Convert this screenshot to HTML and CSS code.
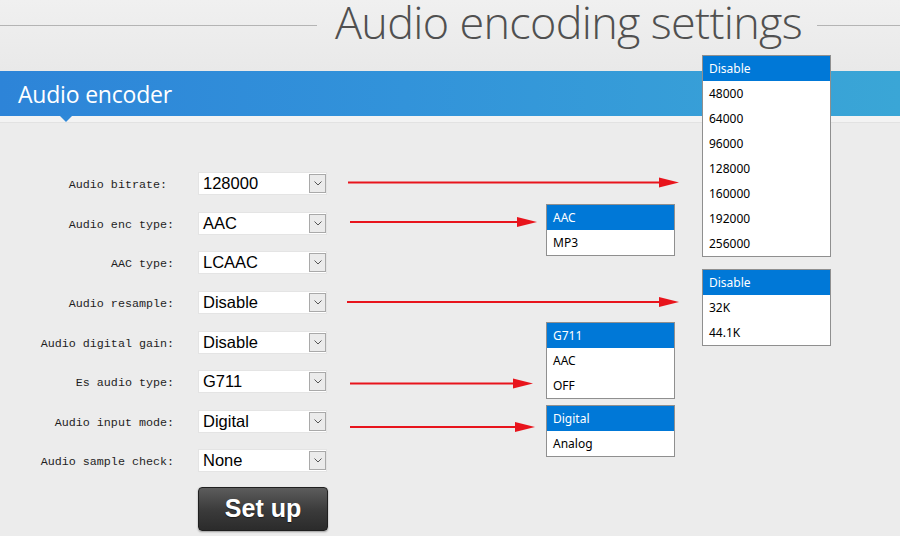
FILE: index.html
```html
<!DOCTYPE html>
<html>
<head>
<meta charset="utf-8">
<link rel="stylesheet" href="styles.css">
</head>
<body>
<header class="title-row">
  <span class="rule rule-left"></span>
  <h1 class="title">Audio encoding settings</h1>
  <span class="rule rule-right"></span>
</header>
<div class="bar"><h2 class="bar-title">Audio encoder</h2></div>
<div class="strip"></div>
<form class="form">
  <label class="lbl">Audio bitrate:&nbsp;</label>
  <div class="sel"><span class="sel-val">128000</span><span class="sel-btn"><svg viewBox="0 0 8 5" width="8" height="5"><path d="M0.5 0.5 L4 4 L7.5 0.5" fill="none" stroke="#555" stroke-width="1"/></svg></span></div>
  <label class="lbl">Audio enc type:</label>
  <div class="sel"><span class="sel-val">AAC</span><span class="sel-btn"><svg viewBox="0 0 8 5" width="8" height="5"><path d="M0.5 0.5 L4 4 L7.5 0.5" fill="none" stroke="#555" stroke-width="1"/></svg></span></div>
  <label class="lbl">AAC type:</label>
  <div class="sel"><span class="sel-val">LCAAC</span><span class="sel-btn"><svg viewBox="0 0 8 5" width="8" height="5"><path d="M0.5 0.5 L4 4 L7.5 0.5" fill="none" stroke="#555" stroke-width="1"/></svg></span></div>
  <label class="lbl">Audio resample:</label>
  <div class="sel"><span class="sel-val">Disable</span><span class="sel-btn"><svg viewBox="0 0 8 5" width="8" height="5"><path d="M0.5 0.5 L4 4 L7.5 0.5" fill="none" stroke="#555" stroke-width="1"/></svg></span></div>
  <label class="lbl">Audio digital gain:</label>
  <div class="sel"><span class="sel-val">Disable</span><span class="sel-btn"><svg viewBox="0 0 8 5" width="8" height="5"><path d="M0.5 0.5 L4 4 L7.5 0.5" fill="none" stroke="#555" stroke-width="1"/></svg></span></div>
  <label class="lbl">Es audio type:</label>
  <div class="sel"><span class="sel-val">G711</span><span class="sel-btn"><svg viewBox="0 0 8 5" width="8" height="5"><path d="M0.5 0.5 L4 4 L7.5 0.5" fill="none" stroke="#555" stroke-width="1"/></svg></span></div>
  <label class="lbl">Audio input mode:</label>
  <div class="sel"><span class="sel-val">Digital</span><span class="sel-btn"><svg viewBox="0 0 8 5" width="8" height="5"><path d="M0.5 0.5 L4 4 L7.5 0.5" fill="none" stroke="#555" stroke-width="1"/></svg></span></div>
  <label class="lbl">Audio sample check:</label>
  <div class="sel"><span class="sel-val">None</span><span class="sel-btn"><svg viewBox="0 0 8 5" width="8" height="5"><path d="M0.5 0.5 L4 4 L7.5 0.5" fill="none" stroke="#555" stroke-width="1"/></svg></span></div>
  <span></span>
  <button type="button" class="setup">Set up</button>
</form>

<svg class="arrows" width="900" height="536" viewBox="0 0 900 536">
  <g stroke="#e8141c" stroke-width="2">
    <line x1="348" y1="182.5" x2="662" y2="182.5"/>
    <line x1="350" y1="222" x2="520" y2="222"/>
    <line x1="347" y1="302" x2="662" y2="302"/>
    <line x1="350" y1="383.5" x2="516" y2="383.5"/>
    <line x1="350" y1="427" x2="518" y2="427"/>
  </g>
  <g fill="#e8141c">
    <polygon points="659,177.5 679,182.5 659,187.5"/>
    <polygon points="517,217 537,222 517,227"/>
    <polygon points="659,297 679,302 659,307"/>
    <polygon points="513,378.5 533,383.5 513,388.5"/>
    <polygon points="515,422 535,427 515,432"/>
  </g>
</svg>

<ul class="list list-bitrate">
  <li class="on">Disable</li><li>48000</li><li>64000</li><li>96000</li><li>128000</li><li>160000</li><li>192000</li><li>256000</li>
</ul>
<ul class="list list-enc">
  <li class="on">AAC</li><li>MP3</li>
</ul>
<ul class="list list-resample">
  <li class="on">Disable</li><li>32K</li><li>44.1K</li>
</ul>
<ul class="list list-es">
  <li class="on">G711</li><li>AAC</li><li>OFF</li>
</ul>
<ul class="list list-input">
  <li class="on">Digital</li><li>Analog</li>
</ul>
</body>
</html>
```
FILE: styles.css
```css
html, body {
  margin: 0;
  padding: 0;
}
body {
  width: 900px;
  height: 536px;
  overflow: hidden;
  background: #ececec;
  position: relative;
  font-family: "Liberation Sans", Arial, sans-serif;
}
.title-row {
  height: 71px;
  display: flex;
  align-items: flex-start;
  background: linear-gradient(#f0f0f0, #e9e9e9);
}
.rule {
  display: block;
  margin-top: 25px;
  border-top: 1px solid #b4b4b4;
}
.rule-left {
  width: 317px;
  margin-right: 18px;
}
.rule-right {
  flex: 1;
  margin-left: 15px;
}
.title {
  margin: 0;
  font-family: "Open Sans", sans-serif;
  font-weight: 300;
  font-size: 45px;
  line-height: 43px;
  color: #505050;
  letter-spacing: -0.7px;
  white-space: nowrap;
}
.bar {
  height: 45px;
  background: linear-gradient(90deg, #2d84d8 0%, #3293da 45%, #3aa6d6 100%);
  position: relative;
}
.bar::after {
  content: "";
  position: absolute;
  left: 60px;
  top: 45px;
  border-left: 6px solid transparent;
  border-right: 6px solid transparent;
  border-top: 6px solid #2f88d8;
}
.bar-title {
  margin: 0;
  padding-left: 18px;
  font-family: "Open Sans", sans-serif;
  font-weight: 400;
  font-size: 23px;
  line-height: 47px;
  color: #fff;
  letter-spacing: -0.2px;
}
.strip {
  height: 6px;
  background: #f3f3f3;
  border-bottom: 1px solid #e2e2e2;
}
.form {
  display: grid;
  grid-template-columns: 174px 129px;
  grid-auto-rows: 39.57px;
  column-gap: 24px;
  padding-top: 41px;
  align-items: center;
}
.lbl {
  text-align: right;
  font-family: "Liberation Mono", monospace;
  font-size: 11.7px;
  color: #1e1e1e;
  white-space: pre;
  padding-top: 3px;
}
.sel {
  display: flex;
  height: 23px;
  background: #fff;
  box-sizing: border-box;
  border: 1px solid #e4e4e4;
}
.sel-val {
  flex: 1;
  padding-left: 4px;
  font-size: 16.5px;
  line-height: 21px;
  color: #000;
}
.sel-btn {
  width: 17px;
  margin: 1px 0 1px 0;
  box-sizing: border-box;
  border: 1px solid #a9a9a9;
  background: #ebebeb;
  display: flex;
  align-items: center;
  justify-content: center;
}
.setup {
  grid-row: 9;
  grid-column: 2;
  align-self: start;
  margin-top: 6px;
  width: 130px;
  height: 44px;
  border: 1px solid #1f1f1f;
  border-radius: 4px;
  background: linear-gradient(#5c5c5c, #3a3a3a 55%, #2b2b2b);
  box-shadow: 0 1px 2px rgba(0,0,0,0.35);
  color: #fff;
  font-family: "Liberation Sans", Arial, sans-serif;
  font-weight: bold;
  font-size: 25px;
  padding: 0;
  text-shadow: 0 1px 1px rgba(0,0,0,0.5);
}
.arrows {
  position: absolute;
  left: 0;
  top: 0;
  pointer-events: none;
}
.list {
  position: absolute;
  margin: 0;
  padding: 0;
  list-style: none;
  background: #fff;
  border: 1px solid #8f8f8f;
  font-family: "Noto Sans", "DejaVu Sans", sans-serif;
  font-size: 12px;
  color: #000;
}
.list li {
  height: 25px;
  line-height: 25px;
  padding-left: 6px;
}
.list li.on {
  background: #0078d7;
  color: #fff;
}
.list-bitrate { left: 702px; top: 55px; width: 127px; }
.list-enc { left: 546px; top: 204px; width: 127px; }
.list-resample { left: 702px; top: 269px; width: 127px; }
.list-es { left: 546px; top: 322px; width: 127px; }
.list-input { left: 546px; top: 405px; width: 127px; }
```
